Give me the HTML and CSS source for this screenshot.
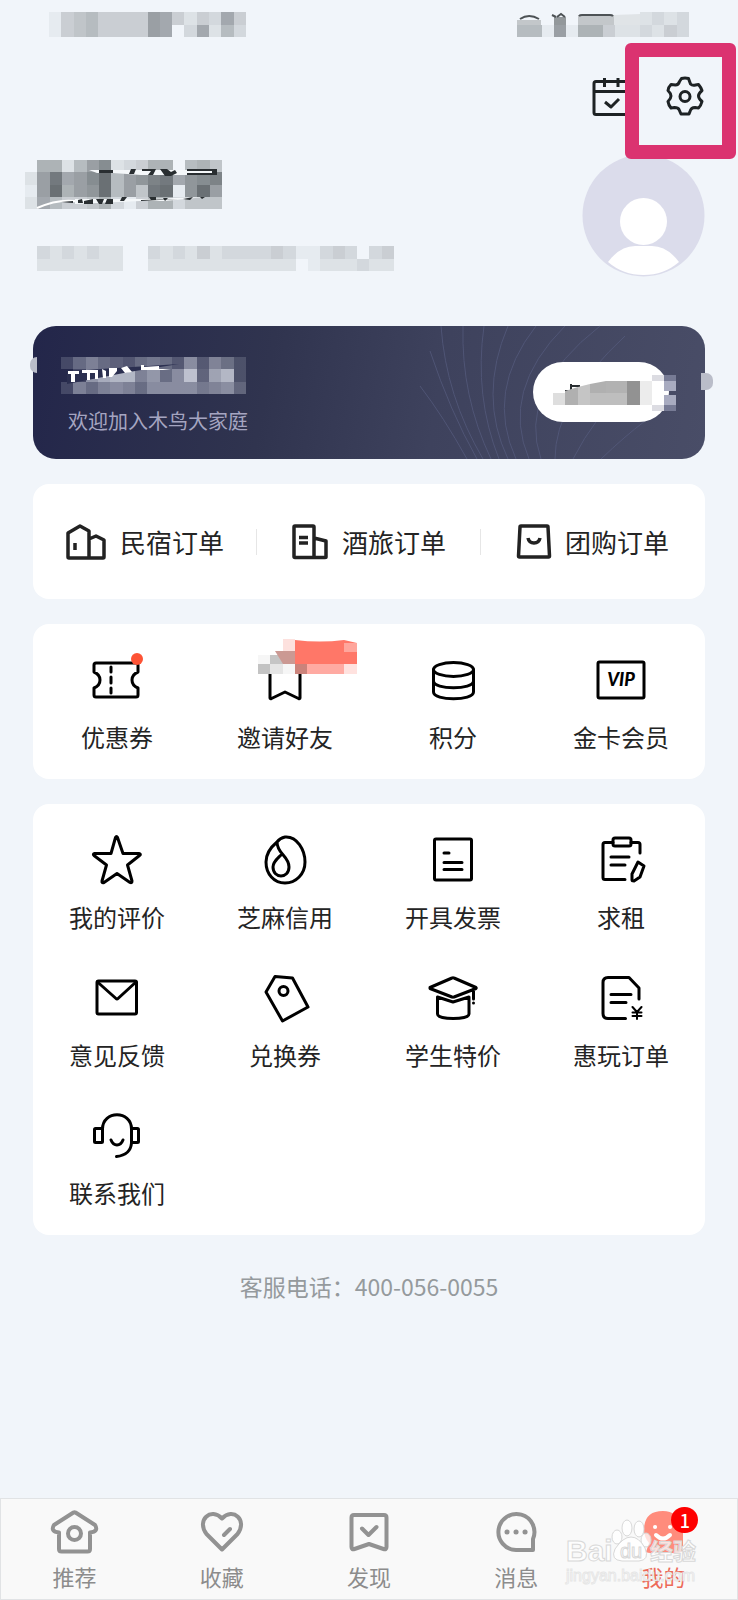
FILE: index.html
```html
<!DOCTYPE html>
<html lang="zh-CN">
<head>
<meta charset="utf-8">
<meta name="viewport" content="width=device-width, initial-scale=1">
<title>我的</title>
<link rel="stylesheet" href="styles.css">
</head>
<body>
<header class="status">
  <svg class="mosaic" width="197" height="25" viewBox="0 0 16 2" preserveAspectRatio="none" data-fill="#60666a" data-rows="1456444498424384/1456444498.38263" aria-hidden="true"></svg>
  <div class="stack">
    <svg class="mosaic" width="172" height="25" viewBox="0 0 14 2" preserveAspectRatio="none" data-fill="#60666a" data-rows="..........2323/66191774223243" aria-hidden="true"></svg>
    <svg class="overlay" width="172" height="25" viewBox="0 0 172 25" aria-hidden="true"><path d="M0 8h24v5H0zM61 3h36v10H61z" fill="#c3c7ca"/><path d="M97 3l26-1v11H97z" fill="#e0e4e7"/><path d="M37 5h12v8H37z" fill="#93989b"/><path d="M3 7q9-6 19 0M35 3l4 2M40 5l4-3 4 3M62 4q1-1 3-1h28q2 0 3 1" fill="none" stroke="#4d5255" stroke-width="2"/></svg>
  </div>
</header>

<div class="tools">
  <button class="tool" type="button" aria-label="日历">
    <svg width="40" height="40" viewBox="0 0 40 40" class="ink"><rect x="2" y="5.500" width="36" height="33" rx="2"/><path d="M2 15.500h36M12.500 2v9M26 2v9M13 26l6 5 8-8" /></svg>
  </button>
  <button class="tool" type="button" aria-label="设置">
    <svg width="40" height="40" viewBox="0 0 40 40" class="ink"><path d="M16.500 2.500q3.500-1 7 0l2 5.500q2 2 5 1l3-.5q2.500 3 3.500 6-3.500 3-3.500 5.500t3.500 5.500q-1 4-3.500 6.500l-3.500-.5q-4 0-5 4l-1 2.500h-8l-2-4.500q-1-2-4.500-2l-3.500.5q-2.500-3-3-6.500 3-3 3-5.500t-3-5.500q0-3 3-6l4.500.5q3 0 4-3.500z"/><circle cx="20" cy="20.500" r="5"/></svg>
    <span class="highlight"></span>
  </button>
</div>

<section class="profile">
  <div class="identity">
    <div class="stack">
      <svg class="mosaic" width="197" height="49" viewBox="0 0 16 4" preserveAspectRatio="none" data-fill="#60666a" data-rows=".77269b23477.675/29d89be69acd8abc/19e79ae695de1ae9/2864457314773555" aria-hidden="true"></svg>
      <svg class="overlay" width="197" height="49" viewBox="0 0 197 49" aria-hidden="true"><path d="M64 10h127v5H116L88 13H72zM50 39h70l60-2-40 4H115l-65 3z" fill="#f5f8fa"/><path d="M12 48q20-9 38-7" fill="none" stroke="#fff" stroke-width="2"/><path d="M74 10h14v3H74zM106 9h5l-2 5h-5zM117 9h14l-3 6h-5l3-4h-9zM135 9h7l4 3 4-2 2 3-6 3h-6zM162 9h30v6h-30v-2h25v-2h-25zM36 42l12-1v2zM53 40l4-1 1 4h-5zM59 41l9-2v5h-9zM71 39l3 5h3l2-5h3l-2 5h8v-5zM97 37h5l-3 4h-4zM116 40l37-1-37 2zM124 37h7v3h-5zM138 38h5l-3 3zM158 39l10-2-3 3zM175 37h5l-3 2z" fill="#292e31"/></svg>
    </div>
    <svg class="mosaic" width="369" height="25" viewBox="0 0 30 2" preserveAspectRatio="none" data-fill="#60666a" data-rows=".3232322..32324233334311343.34/.2222222..222222222222.1222322" aria-hidden="true"></svg>
  </div>
  <svg class="avatar" width="123" height="123" viewBox="0 0 123 123" role="img" aria-label="头像"><circle cx="61.500" cy="61.500" r="61" fill="#dbdceb"/><circle cx="61.500" cy="67.500" r="23.500" fill="#fff"/><path d="M26 108q12-16 27-16h17q15 0 27 16-15 13-35.500 13T26 108z" fill="#fff"/></svg>
</section>

<main class="content">
  <section class="member">
    <svg class="rays" width="300" height="133" viewBox="0 0 300 133" aria-hidden="true"><path d="M0 0q5 70 42 133M22 0q-2 70 28 133M43 0q-10 70 15 133M67 0q-30 70 0 133M95 0Q44 65 75 133M124 0Q59 65 88 133M159 0Q76 65 100 133M184 10Q114 75 114 133M184 65Q154 90 132 133M-11 25Q9 85 36 133M-21 60Q2 90 26 133M204 95Q184 110 160 133" transform="translate(36)"/></svg>
    <div class="welcome">
      <div class="stack">
        <svg class="mosaic" width="185" height="37" viewBox="0 0 15 3" preserveAspectRatio="none" data-fill="#c8ccd8" data-rows="368654676494863/.3acdd8a69e5bd3/386898699997895" aria-hidden="true"></svg>
        <svg class="overlay" width="185" height="37" viewBox="0 0 185 37" aria-hidden="true"><path d="M6 14l50-3 62-4-50 8-62 12z" fill="#2b2f50"/><path d="M7 14h11v3h-4v8h-4v-8H7zM21 13h16v9h-3v-6h-5v7h-3v-7h-5zM41 12l4 2v7h-3zM48 11h8v3l-5 6h-3zM60 11l6-2 5 6-7 1zM80 12V8h3v2l15-1v3h12l-8 1H80z" fill="#fff"/></svg>
      </div>
      <p class="greeting">欢迎加入木鸟大家庭</p>
    </div>
    <button class="join" type="button" aria-label="会员">
      <svg width="136" height="60" viewBox="0 0 136 60" aria-hidden="true"><path d="M32 29h16M38 22v7M38 24h9M58 24h4" fill="none" stroke="#292e31" stroke-width="2"/><path d="M20 31h12v12H20z" fill="#dedede"/><path d="M32 29l13-4v18H32z" fill="#b0b0b0"/><path d="M45 25l12-3v21H45z" fill="#c5c5c5"/><path d="M57 22l16-3v24H57z" fill="#b0b0b0"/><path d="M73 19h21v24H73z" fill="#b2b2b2"/><path d="M94 19h13v24H94z" fill="#929292"/><path d="M57 31h37v12H57z" fill="#bebebe"/><path d="M107 19h12v24h-12z" fill="#ececec"/><path d="M119 13h24v6h-24zM119 43h24v6h-24z" fill="#dcdce2"/><path d="M131 19h12v10h-12zM131 33h12v10h-12z" fill="#a8abc0"/><path d="M131 13h12v6h-12zM131 43h12v6h-12z" fill="#777b95"/></svg>
    </button>
    <span class="knob knob-left"></span><span class="knob knob-right"></span>
  </section>

  <nav class="card orders">
    <a href="#"><svg width="40" height="40" viewBox="0 0 40 40" class="dark"><path d="M23 36H3q-1 0-1-1V11L14 4l9 5zM23 17l7-3 8 4v17q0 1-1 1H23M9 21v7"/></svg>民宿订单</a>
    <a href="#"><svg width="36" height="40" viewBox="0 0 36 40" class="dark"><path d="M22 35.500H3q-1 0-1-1V5q0-1 1-1h18q1 0 1 1zM22 16l12 3v16q0 .5-1 .5H22M7 15.500h9M7 21h9"/></svg>酒旅订单</a>
    <a href="#"><svg width="34" height="40" viewBox="0 0 34 40" class="dark"><path d="M4 4h26q1 0 1 1l1.500 29q0 1-1 1h-29q-1 0-1-1L3 5q0-1 1-1zM11 16q1 5 6 5t6-5"/></svg>团购订单</a>
  </nav>

  <nav class="card grid">
    <a href="#"><span class="stack"><svg width="50" height="50" viewBox="0 0 50 50" class="line"><path d="M4 8h40q2 0 2 2v7q-6 2.500-6 8t6 8v7q0 2-2 2H4q-2 0-2-2v-7q6-2.500 6-8t-6-8v-7q0-2 2-2zM19 12v5M19 22v6M19 33v5"/></svg><span class="dot"></span></span>优惠券</a>
    <a href="#"><span class="stack"><svg width="50" height="50" viewBox="0 0 50 50" class="line"><path d="M10 12v31q0 1 1.500.5L25 37l13.500 6.500q1.500.5 1.500-.5V12"/></svg><svg class="cover" width="99" height="35" viewBox="0 0 99 35" aria-hidden="true"><path d="M0 16h50v19H0z" fill="#f6f6f6"/><path d="M12 16h13v9H12z" fill="#c5c5c5"/><path d="M0 25h12v10H0z" fill="#c3c3c3"/><path d="M12 25h13v10H12z" fill="#e5e5e5"/><path d="M25 0h12v12H25z" fill="#fde1de"/><path d="M17 12h20v13H25z" fill="#cb9993"/><path d="M37 1q25 3 49 0l13 3v21H37z" fill="#ff7768"/><path d="M86 4h13v9H86z" fill="#ffa69c"/><path d="M37 25h12v10H37z" fill="#cb837b"/><path d="M49 25h37v10H49z" fill="#ffaaa2"/><path d="M86 25h13v10H86z" fill="#ffe2df"/></svg></span>邀请好友</a>
    <a href="#"><svg width="50" height="50" viewBox="0 0 50 50" class="line"><ellipse cx="25.500" cy="14.500" rx="20" ry="7"/><path d="M5.500 14.500V37c0 9 40 9 40 0V14.500M5.500 26c0 9 40 9 40 0"/></svg>积分</a>
    <a href="#"><svg width="50" height="50" viewBox="0 0 50 50" class="line"><rect x="2" y="7" width="46" height="36" rx="1.500"/><text x="25" y="31" text-anchor="middle" class="vip">VIP</text></svg>金卡会员</a>
  </nav>

  <nav class="card grid">
    <a href="#"><svg width="50" height="50" viewBox="0 0 50 50" class="line"><path d="M23.500 2.500q1-2 2 0L31 18.500h16q2.500.5.500 2L35.500 30l4.500 16q0 2.500-2 1.500L25 38.500l-13 9q-2.500 1-2-1.500l4.500-16L2 20.500q-1.500-1.500.5-2H19z"/></svg>我的评价</a>
    <a href="#"><svg width="50" height="50" viewBox="0 0 50 50" class="line"><path d="M25 2C37 1 45 15 45 27s-9 21-20 21S6 39 6 27C6 19 11 12 17 7q3-4 8-5zM17 7c0 12 12 14 12 25 0 12-16 12-16 0 0-5 4-8 8-12"/></svg>芝麻信用</a>
    <a href="#"><svg width="50" height="50" viewBox="0 0 50 50" class="line"><rect x="6.500" y="4" width="37" height="41" rx="1.500"/><path d="M16 18h5M16 27.500h18M16 34.500h18"/></svg>开具发票</a>
    <a href="#"><svg width="50" height="50" viewBox="0 0 50 50" class="line"><rect x="17" y="3" width="18" height="8" rx="2"/><path d="M17 7.500H9q-2 0-2 2v33q0 2 2 2h20M35 7.500h7q2 0 2 2V18M15 22h18M15 30h14M42 27l6 4-4 11-6 4q-2 0-2-1v-6z"/></svg>求租</a>
    <a href="#"><svg width="50" height="50" viewBox="0 0 50 50" class="line"><rect x="5" y="8" width="39.500" height="33" rx="1.500"/><path d="M5.500 9L24 25.500q1 1 2 0L44 9"/></svg>意见反馈</a>
    <a href="#"><svg width="50" height="50" viewBox="0 0 50 50" class="line"><path d="M15 3.500l17.500 1.500L48 34 22.500 48 6 19z"/><circle cx="23.500" cy="18" r="4.500"/></svg>兑换券</a>
    <a href="#"><svg width="50" height="50" viewBox="0 0 50 50" class="line"><path d="M2 14.500L24 5q1-.5 2 0l22 9.500q.5.500 0 1L26 24q-1 .5-2 0L2 15.500zM45.500 16v10M45.500 30v.1M9.500 24v17c0 6 31.500 6 31.500 0V24l-16 5z"/></svg>学生特价</a>
    <a href="#"><svg width="50" height="50" viewBox="0 0 50 50" class="line"><path d="M29.500 45.500H12q-5 0-5-5V9.500q0-5 5-5h21L43 15v11M15 21.500h20M15 29.500h15"/><path d="M36.500 34l4.500 5 4.500-5M41 39v7M36.500 39.500h9M36.500 43h9" stroke-width="2"/></svg>惠玩订单</a>
    <a href="#"><svg width="50" height="50" viewBox="0 0 50 50" class="line"><path d="M10.500 18c0-19 29-19 29 0v14q-1 12-15 13.500M19 29q2 5 6 5t6-5"/><rect x="2.500" y="17.500" width="8" height="14" rx="1"/><rect x="39.500" y="17.500" width="7" height="14" rx="1"/></svg>联系我们</a>
  </nav>

  <p class="phone">客服电话：400-056-0055</p>
</main>

<nav class="tabs">
  <a href="#"><svg width="50" height="44" viewBox="0 0 50 44" class="tab-icon"><path d="M23.500 2.500L4 15q-4 6.500 5 7.500V39q0 2.500 2.500 2.500h26q2.500 0 2.500-2.500V22.500q9-1 5-7.500L25.500 2.500q-1-.5-2 0z"/><circle cx="24.500" cy="23.500" r="6.500"/></svg>推荐</a>
  <a href="#"><svg width="50" height="44" viewBox="0 0 50 44" class="tab-icon"><path d="M25 39.500L9.500 24C-1 10 14-3 25 8.500 36-3 51 10 40.500 24zM27 25l6-6"/></svg>收藏</a>
  <a href="#"><svg width="50" height="44" viewBox="0 0 50 44" class="tab-icon"><path d="M10 5h30q2.500 0 2.500 2.500V37q0 3-3 2L25 34l-14.500 5q-3 1-3-2V7.500Q7.500 5 10 5zM18 18.500l6.500 6.500 8-8"/></svg>发现</a>
  <a href="#"><svg width="50" height="44" viewBox="0 0 50 44" class="tab-icon"><path d="M42 40H25a18 18 0 1 1 17-11z"/><path d="M16 22h.1M25 22h.1M34 22h.1" stroke-width="5"/></svg>消息</a>
  <a href="#" class="active"><span class="stack"><svg width="50" height="44" viewBox="0 0 50 44"><path d="M25 1C36 1 45 9 45 21v20q-7 4-14 1-8 3-14 0-5 2-9 0l3-9Q6 27 6 20 6 1 25 1z" fill="#ff8c7c"/><path d="M17 17h.1M32 17h.1M18 25q7 7 14 0" fill="none" stroke="#fff" stroke-width="4" stroke-linecap="round"/></svg><span class="badge">1</span></span>我的</a>
  <div class="watermark" aria-hidden="true">
    <svg width="132" height="45" viewBox="0 0 132 45"><g class="wm"><ellipse cx="51" cy="17" rx="5" ry="7"/><ellipse cx="61" cy="8" rx="5" ry="8"/><ellipse cx="73" cy="9" rx="5" ry="8"/><ellipse cx="80" cy="20" rx="5" ry="7"/><path d="M65 17q8 0 14 11 5 12-6 13H56q-12-1-7-12 8-12 16-12z"/><text x="0" y="41" font-size="30">Bai</text><text x="54" y="38" font-size="20" font-weight="400">du</text><text x="84" y="40" font-size="23">经验</text></g></svg>
    <span class="site">jingyan.baidu.com</span>
  </div>
</nav>
<script src="mosaic.js"></script>
</body>
</html>
```
FILE: styles.css
```css
* { box-sizing: border-box; }

body {
  margin: 0;
  min-height: 100vh;
  display: flex;
  flex-direction: column;
  background: #f1f5fa;
  color: #242424;
  font-family: "Noto Sans CJK SC", sans-serif;
}

a { color: inherit; text-decoration: none; }
p { margin: 0; }
svg { display: block; flex: none; overflow: visible; }
button { border: 0; padding: 0; background: none; font: inherit; }

.stack { position: relative; display: block; }
.overlay { position: absolute; left: 0; top: 0; }

.status {
  display: flex;
  justify-content: space-between;
  padding: 12px 49px;
}

.tools {
  display: flex;
  justify-content: flex-end;
  gap: 33px;
  padding: 27px 33px 0;
}
.tool { position: relative; }
.highlight {
  position: absolute;
  left: -40px;
  top: -33px;
  width: 111px;
  height: 116px;
  border: 14px solid #db3370;
  border-radius: 6px;
}

.ink { fill: none; stroke: #1d2224; stroke-width: 3; stroke-linejoin: round; }
.dark { fill: none; stroke: #222; stroke-width: 3.5; stroke-linejoin: round; }
.line { fill: none; stroke: #000; stroke-width: 3; stroke-linejoin: round; stroke-linecap: round; }
.vip { fill: #000; stroke: none; font: italic 900 18px Lato, sans-serif; }

.profile {
  display: flex;
  justify-content: space-between;
  padding: 38px 33px 49px 25px;
}
.identity {
  display: flex;
  flex-direction: column;
  gap: 37px;
  padding-top: 6px;
}

.content {
  display: flex;
  flex-direction: column;
  gap: 25px;
  padding: 0 33px;
}

.member {
  position: relative;
  display: flex;
  justify-content: space-between;
  align-items: flex-start;
  padding: 31px 36px 23px 28px;
  border-radius: 23px;
  background: linear-gradient(100deg, #23264a 0%, #30344f 35%, #3e425d 60%, #494d67 100%);
}
.welcome { position: relative; display: flex; flex-direction: column; gap: 12px; }
.greeting { padding-left: 7px; font-size: 20px; line-height: 30px; color: #a5a5c1; }
.rays { position: absolute; right: 0; top: 0; fill: none; stroke: #575d80; stroke-width: 1; opacity: 0.7; }
.join {
  position: relative;
  margin-top: 5px;
  width: 136px;
  height: 60px;
  border-radius: 30px;
  background: #fff;
}
.knob { position: absolute; background: #babdc9; }
.knob-left { left: -3px; top: 31px; width: 7px; height: 16px; border-radius: 7px 0 0 7px; }
.knob-right { right: -8px; top: 47px; width: 12px; height: 17px; border-radius: 0 7px 7px 0; }

.card { border-radius: 16px; background: #fff; }

.orders {
  display: grid;
  grid-template-columns: repeat(3, 1fr);
  padding: 38px 0 37px;
}
.orders a {
  display: flex;
  align-items: center;
  justify-content: center;
  gap: 14px;
  font-size: 26px;
  line-height: 40px;
  background: linear-gradient(#e6e6e6, #e6e6e6) right center / 1px 26px no-repeat;
}
.orders a:last-child { background: none; }

.grid {
  display: grid;
  grid-template-columns: repeat(4, 1fr);
  row-gap: 39px;
  padding: 31px 0 25px;
}
.grid a {
  display: flex;
  flex-direction: column;
  align-items: center;
  gap: 15px;
  font-size: 24px;
  line-height: 34px;
}
.dot {
  position: absolute;
  right: -1px;
  top: -2px;
  width: 12px;
  height: 12px;
  border-radius: 50%;
  background: #fd5335;
}
.cover { position: absolute; left: -2px; top: -16px; }

.phone {
  padding: 9px 0 30px;
  text-align: center;
  font-size: 23px;
  line-height: 34px;
  color: #959a9d;
}

.tabs {
  position: relative;
  display: grid;
  grid-template-columns: repeat(5, 1fr);
  margin-top: auto;
  padding: 11px 0 8px;
  border: 1px solid #e1e3e5;
  background: #f9f9f9;
}
.tabs a {
  display: flex;
  flex-direction: column;
  align-items: center;
  gap: 7px;
  font-size: 22px;
  line-height: 30px;
  color: #8c8c8c;
}
.tabs .active { color: #ed6a58; }
.tab-icon { fill: none; stroke: #929292; stroke-width: 4; stroke-linejoin: round; stroke-linecap: round; }
.badge {
  position: absolute;
  right: -10px;
  top: -3px;
  width: 27px;
  height: 26px;
  border-radius: 13px;
  background: #fe0000;
  color: #fff;
  font-size: 18px;
  font-weight: 500;
  line-height: 26px;
  text-align: center;
}

.watermark { position: absolute; right: 39px; top: 21px; width: 132px; pointer-events: none; }
.wm { fill: #fff; fill-opacity: 0.75; stroke: #d8d8d8; stroke-width: 1; font-family: "Liberation Sans", "Noto Sans CJK SC", sans-serif; font-weight: 700; }
.site {
  display: block;
  font: 16px/22px "Liberation Sans", sans-serif;
  color: #fff;
  -webkit-text-stroke: 1px rgba(215, 215, 215, 0.6);
}
```
FILE: mosaic.js
```javascript
// Fills each mosaic with unit cells; every hex digit is the cell's strength.
document.querySelectorAll('.mosaic').forEach(function (svg) {
  svg.dataset.rows.split('/').forEach(function (row, y) {
    row.split('').forEach(function (level, x) {
      var strength = parseInt(level, 16);
      if (!strength) return;
      var cell = document.createElementNS('http://www.w3.org/2000/svg', 'rect');
      cell.setAttribute('x', x);
      cell.setAttribute('y', y);
      cell.setAttribute('width', 1);
      cell.setAttribute('height', 1);
      cell.setAttribute('fill', svg.dataset.fill);
      cell.setAttribute('opacity', strength / 15);
      cell.setAttribute('shape-rendering', 'crispEdges');
      svg.appendChild(cell);
    });
  });
});
```
